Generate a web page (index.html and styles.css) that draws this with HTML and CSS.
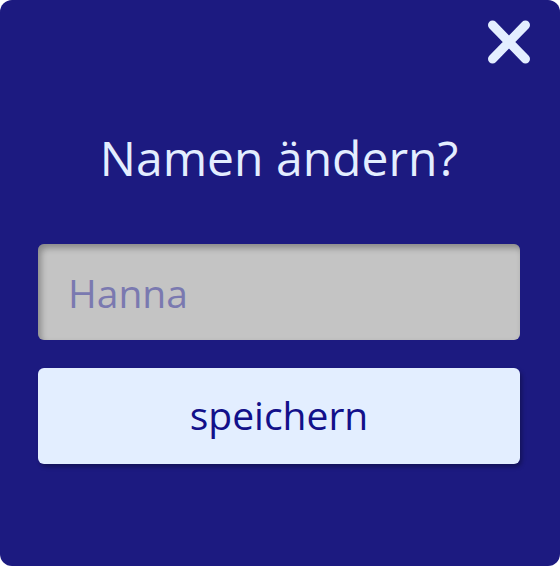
FILE: index.html
```html
<!DOCTYPE html>
<html lang="de">
<head>
<meta charset="utf-8">
<link rel="stylesheet" href="styles.css">
</head>
<body>
<div class="dialog">
  <div class="topbar">
    <button class="close" aria-label="schließen">
      <svg width="44" height="46" viewBox="0 0 44 46">
        <path d="M5.5 6 L38.5 40 M38.5 6 L5.5 40" stroke="#e3eeff" stroke-width="9" stroke-linecap="round"/>
      </svg>
    </button>
  </div>
  <h1 class="title">Namen ändern?</h1>
  <div class="form">
    <input class="name-input" type="text" placeholder="Hanna">
    <button class="save">speichern</button>
  </div>
</div>
</body>
</html>
```
FILE: styles.css
```css
html, body {
  margin: 0;
  padding: 0;
  background: #ffffff;
}
.dialog {
  width: 560px;
  height: 566px;
  box-sizing: border-box;
  background: #1c1a80;
  border-radius: 12px;
  padding: 19px 40px 0 38px;
  font-family: "Open Sans", "Noto Sans", sans-serif;
}
.topbar {
  display: flex;
  justify-content: flex-end;
  margin-right: -11px;
}
.close {
  background: none;
  border: none;
  padding: 0;
  width: 44px;
  height: 46px;
  cursor: pointer;
}
.close svg {
  display: block;
}
.title {
  margin: 63px 0 0 0;
  text-align: center;
  color: #e3eeff;
  font-weight: 400;
  font-size: 48px;
  line-height: 60px;
}
.form {
  margin-top: 56px;
  display: flex;
  flex-direction: column;
  gap: 28px;
}
.name-input {
  height: 96px;
  box-sizing: border-box;
  border: none;
  border-radius: 6px;
  background: #c4c4c4;
  box-shadow: inset 3px 4px 6px rgba(0,0,0,0.3);
  padding: 0 30px;
  font-family: inherit;
  font-size: 39px;
  color: #333;
  outline: none;
}
.name-input::placeholder {
  color: #7a79b0;
}
.save {
  height: 96px;
  border: none;
  border-radius: 6px;
  background: #e3eeff;
  color: #12108a;
  font-family: inherit;
  font-size: 39px;
  box-shadow: 2px 3px 4px rgba(0,0,0,0.3);
  padding: 0 0 4px 0;
}
```
